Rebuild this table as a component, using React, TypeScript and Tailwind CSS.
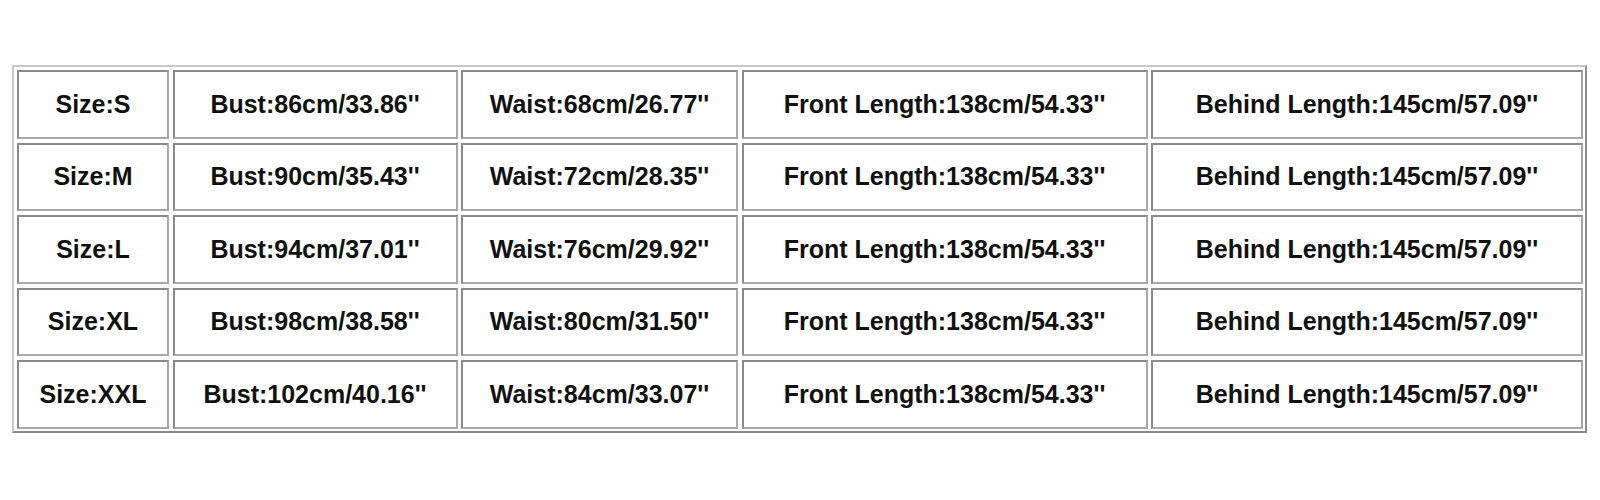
import React from "react";

const rows = [
  ["Size:S", "Bust:86cm/33.86''", "Waist:68cm/26.77''", "Front Length:138cm/54.33''", "Behind Length:145cm/57.09''"],
  ["Size:M", "Bust:90cm/35.43''", "Waist:72cm/28.35''", "Front Length:138cm/54.33''", "Behind Length:145cm/57.09''"],
  ["Size:L", "Bust:94cm/37.01''", "Waist:76cm/29.92''", "Front Length:138cm/54.33''", "Behind Length:145cm/57.09''"],
  ["Size:XL", "Bust:98cm/38.58''", "Waist:80cm/31.50''", "Front Length:138cm/54.33''", "Behind Length:145cm/57.09''"],
  ["Size:XXL", "Bust:102cm/40.16''", "Waist:84cm/33.07''", "Front Length:138cm/54.33''", "Behind Length:145cm/57.09''"],
];

export default function App() {
  return (
    <div className="w-[1600px] h-[500px] bg-white pt-[65px] pl-[12px]" style={{ fontFamily: '"Liberation Sans", Arial, sans-serif' }}>
      <div className="w-[1575px] border-2 border-t-[#c8c8c8] border-l-[#c8c8c8] border-r-[#8a8a8a] border-b-[#8a8a8a] pt-[3px] pl-[3px] pr-[2px] pb-[2px]">
        <div className="grid grid-cols-[152px_285px_277px_406px_432px] grid-rows-[repeat(5,68.5px)] gap-x-[3.5px] gap-y-[4px]">
          {rows.flatMap((r, i) =>
            r.map((c, j) => (
              <div
                key={`${i}-${j}`}
                className="flex items-center justify-center border-2 border-t-[#8a8a8a] border-l-[#8a8a8a] border-r-[#a8a8a8] border-b-[#a8a8a8] text-[25px] font-bold text-[#111111] whitespace-nowrap"
              >
                {c}
              </div>
            ))
          )}
        </div>
      </div>
    </div>
  );
}
